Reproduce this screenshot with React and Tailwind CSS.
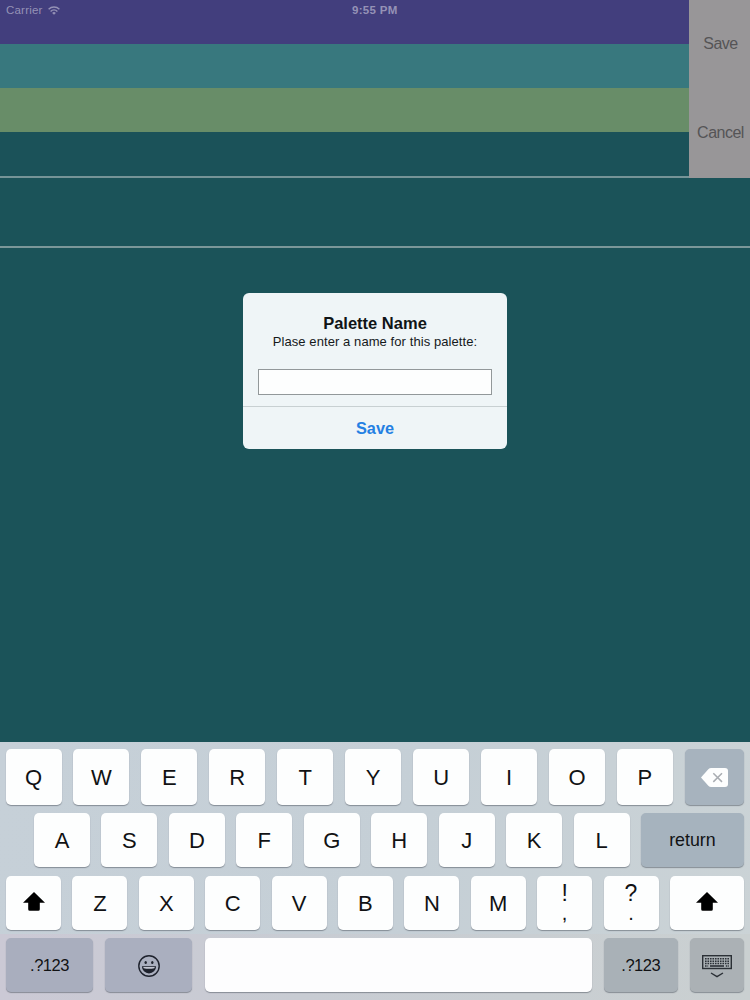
import React, { useState } from "react";

const stripes = ["bg-[#423e7d]", "bg-[#38787e]", "bg-[#688d68]", "bg-[#1b5259]"];

const Key = ({ className = "", children, ...props }) => (
  <button
    type="button"
    className={`flex shrink-0 items-center justify-center rounded-[5px] shadow-[0_1px_1px_rgba(80,88,98,0.55)] ${className}`}
    {...props}
  >
    {children}
  </button>
);

const LetterKey = ({ letter, className }) => (
  <Key className={`bg-[#fdfefe] pt-[1px] text-[22px] leading-none ${className}`}>{letter}</Key>
);

const PunctuationKey = ({ top, bottom }) => (
  <Key className="w-[55px] flex-col bg-[#fdfefe]">
    <span className="h-[28px] text-[23px] leading-[29px]">{top}</span>
    <span className="h-[20px] text-[20px] leading-[12px]">{bottom}</span>
  </Key>
);

const WifiIcon = () => (
  <svg className="ml-[5px] h-[9px] w-3" viewBox="0 0 12 9" fill="none" stroke="#9592b6" strokeWidth="1.4">
    <path d="M.6 3.2a7.8 7.8 0 0 1 10.8 0" />
    <path d="M2.6 5.4a4.9 4.9 0 0 1 6.8 0" />
    <path d="M6 8.8 4.1 6.9a2.7 2.7 0 0 1 3.8 0Z" fill="#9592b6" stroke="none" />
  </svg>
);

const ShiftIcon = () => (
  <svg className="h-[19px] w-[22px]" viewBox="0 0 22 19">
    <path d="M11 0 22 10.8H16.8V17.3Q16.8 18.8 15.3 18.8H6.7Q5.2 18.8 5.2 17.3V10.8H0Z" fill="#000" />
  </svg>
);

const DeleteIcon = () => (
  <svg className="h-[19px] w-[27px]" viewBox="0 0 27 19" fill="none">
    <path d="M0 9.5 7.3 1.3Q8.5 0 10.2 0H24Q27 0 27 3V16Q27 19 24 19H10.2Q8.5 19 7.3 17.7Z" fill="#fdfefe" />
    <path d="m12.3 5.2 8.7 8.7m0-8.7-8.7 8.7" stroke="#a9adb2" strokeWidth="1.5" />
  </svg>
);

const EmojiIcon = () => (
  <svg className="h-[22px] w-[22px]" viewBox="0 0 22 22" fill="none">
    <circle cx="11" cy="11" r="10.2" stroke="#1e222d" strokeWidth="1.4" />
    <ellipse cx="7.7" cy="7.6" rx="1.2" ry="1.5" fill="#1e222d" />
    <ellipse cx="14.3" cy="7.6" rx="1.2" ry="1.5" fill="#1e222d" />
    <path d="M3.9 11.2h14.2a7.1 7.2 0 0 1-14.2 0Z" fill="#1e222d" />
    <path d="M5.2 12h11.6l-.5 1.3q-5.3 1.1-10.6 0Z" fill="#c3c6d2" />
  </svg>
);

const HideKeyboardIcon = () => (
  <svg className="h-[23px] w-[30px]" viewBox="0 0 30 23" fill="none" stroke="#2b3036">
    <rect x=".7" y=".7" width="28.6" height="12.8" strokeWidth="1.4" />
    <path d="M3 3.8h24M3 6.2h24M3 8.6h24" strokeWidth="1.5" strokeDasharray="1.6 .89" />
    <path d="M3 11h3.2M23.8 11H27" strokeWidth="1.5" strokeDasharray="1.6 .8" />
    <path d="M8 11h14" strokeWidth="1.6" />
    <path d="m9 18 6 3.6 6-3.6" strokeWidth="1.4" />
  </svg>
);

const Keyboard = () => (
  <div className="h-[258px] bg-[linear-gradient(100deg,#c6d0d8_0%,#c5cfd6_55%,#cbd3d6_100%)] pt-[7px] text-[#111214]">
    <div className="flex h-[56px] justify-between pr-[6px] pl-[5.5px]">
      {"QWERTYUIOP".split("").map((l) => (
        <LetterKey key={l} letter={l} className="w-[56px]" />
      ))}
      <Key className="w-[59px] bg-[#a7b3be]" aria-label="Delete">
        <DeleteIcon />
      </Key>
    </div>
    <div className="mt-2 flex h-[54px] justify-between pr-[6px] pl-[34px]">
      {"ASDFGHJKL".split("").map((l) => (
        <LetterKey key={l} letter={l} className="w-[56px]" />
      ))}
      <Key className="w-[103px] bg-[#a6b3be] text-[17.8px]">return</Key>
    </div>
    <div className="mt-[9px] flex h-[54px] justify-between px-[6px]">
      <Key className="w-[55px] bg-[#fdfefe] pb-[3px]" aria-label="Shift">
        <ShiftIcon />
      </Key>
      {"ZXCVBNM".split("").map((l) => (
        <LetterKey key={l} letter={l} className="w-[55px]" />
      ))}
      <PunctuationKey top="!" bottom="," />
      <PunctuationKey top="?" bottom="." />
      <Key className="w-[74px] bg-[#fdfefe] pb-[3px]" aria-label="Shift">
        <ShiftIcon />
      </Key>
    </div>
    {/* bottom row sits on a slightly pink to grey wash */}
    <div className="mt-1 flex h-[66px] justify-between bg-[linear-gradient(90deg,#cbc9d5_0%,#c8ccd3_40%,#cad0d1_100%)] px-[6px] pt-1 pb-2">
      <Key className="w-[87px] bg-[#a9aebe] text-[16.5px] tracking-[-0.5px]">.?123</Key>
      <Key className="w-[87px] bg-[#aaafbf] pt-[1px]" aria-label="Emoji">
        <EmojiIcon />
      </Key>
      <Key className="w-[387px] bg-[#fdfdfe]" aria-label="Space" />
      <Key className="w-[74px] bg-[#a9b1b7] text-[16.5px] tracking-[-0.5px]">.?123</Key>
      <Key className="w-[54px] bg-[#abb1b5] pt-[2px]" aria-label="Hide keyboard">
        <HideKeyboardIcon />
      </Key>
    </div>
  </div>
);

const NameDialog = () => {
  const [name, setName] = useState("");

  return (
    <div className="absolute top-[293px] left-[243px] flex h-[156px] w-[264px] flex-col overflow-hidden rounded-[6px] bg-[#eff5f7] text-center text-black">
      <div className="flex h-[113px] flex-col px-[15px] pt-[20px]">
        <h1 className="text-[16.5px] leading-[20px] font-bold text-[#101416]">Palette Name</h1>
        <p className="text-[13px] leading-[18px] tracking-[0.08px] whitespace-nowrap text-[#15191b]">
          Plase enter a name for this palette:
        </p>
        <input
          className="mt-[18px] h-[26px] w-full border border-[#92989a] bg-[#fdfefe] px-1 text-[13px] outline-none"
          value={name}
          onChange={(e) => setName(e.target.value)}
          aria-label="Palette Name"
        />
      </div>
      <button type="button" className="flex-1 border-t border-[#c8d0d2] text-[16.3px] font-bold text-[#2480e3]">
        Save
      </button>
    </div>
  );
};

const App = () => (
  <div className="relative flex h-[1000px] w-[750px] flex-col overflow-hidden bg-[#1b5359] font-['Liberation_Sans',Arial,sans-serif]">
    <div className="flex h-[178px]">
      <div className="flex flex-1 flex-col border-b-2 border-[#769497]">
        {stripes.map((color) => (
          <div key={color} className={`flex-1 ${color}`} />
        ))}
      </div>
      <div className="flex w-[61px] flex-col bg-[#989698] pl-[2px] text-center text-[16px] tracking-[-0.5px] text-[#555456]">
        <button type="button" className="h-[88px]">Save</button>
        <button type="button" className="h-[90px]">Cancel</button>
      </div>
    </div>
    <div className="h-[70px] border-b-2 border-[#7b9799]" />
    <div className="flex-1" />
    <Keyboard />

    <div className="absolute top-0 left-0 flex h-[21px] w-[689px] items-center pl-[6px] text-[11.5px] text-[#9592b6]">
      <span className="tracking-[0.2px]">Carrier</span>
      <WifiIcon />
      <span className="absolute left-[352px] text-[11.5px] font-bold tracking-[0.3px]">9:55 PM</span>
    </div>
    <NameDialog />
  </div>
);

export default App;
